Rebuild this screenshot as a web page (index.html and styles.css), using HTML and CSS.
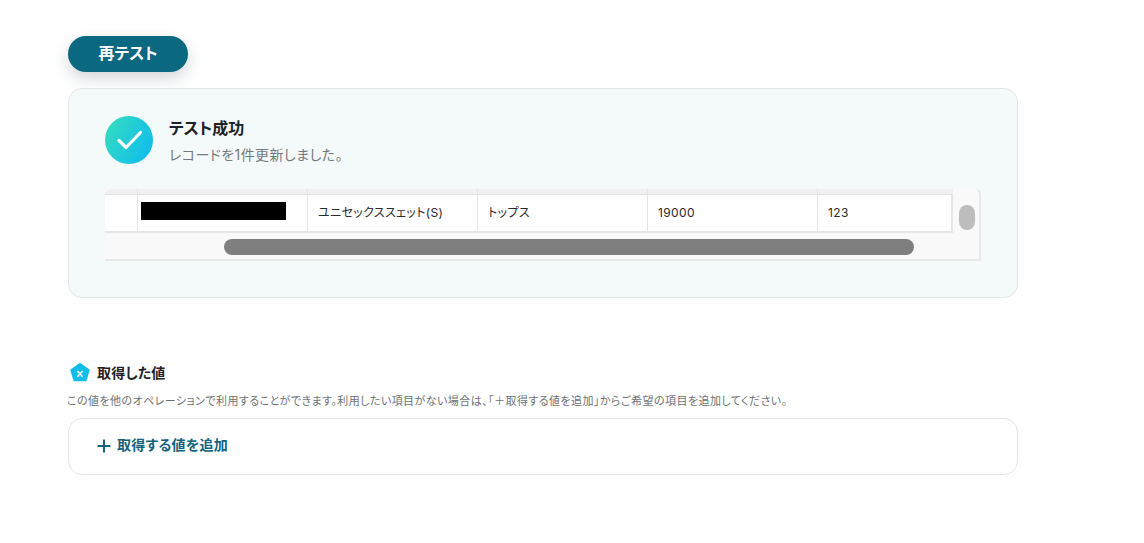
FILE: index.html
```html
<!DOCTYPE html>
<html lang="ja">
<head>
<meta charset="utf-8">
<title>テスト成功</title>
<link rel="stylesheet" href="styles.css">
</head>
<body>
<main class="page">
  <button class="retest">再テスト</button>
  <section class="result">
    <div class="status">
      <svg class="check" viewBox="0 0 48 48" width="48" height="48">
        <defs><linearGradient id="cg" x1="0" y1="0.2" x2="1" y2="0.7"><stop offset="0" stop-color="#34dcc0"/><stop offset="1" stop-color="#10bdec"/></linearGradient></defs>
        <circle cx="24" cy="24" r="24" fill="url(#cg)"/>
        <path d="M14 24.500l7 7L35.500 16.500" fill="none" stroke="#fff" stroke-width="3.200" stroke-linecap="round" stroke-linejoin="round"/>
      </svg>
      <div class="status-text">
        <h2 class="status-title">テスト成功</h2>
        <p class="status-sub">レコードを1件更新しました。</p>
      </div>
    </div>
    <div class="sheet">
      <div class="sheet-main">
        <div class="sheet-head">
          <div class="hc c0"></div><div class="hc c1"></div><div class="hc c1"></div><div class="hc c1"></div><div class="hc c1"></div><div class="hc c5"></div>
        </div>
        <div class="sheet-row">
          <div class="cell c0"></div>
          <div class="cell c1"><span class="redact"></span></div>
          <div class="cell c1">ユニセックススェット(S)</div>
          <div class="cell c1">トップス</div>
          <div class="cell c1">19000</div>
          <div class="cell c5">123</div>
        </div>
        <div class="hbar"><span class="hthumb"></span></div>
      </div>
      <div class="vbar"><span class="vthumb"></span></div>
    </div>
  </section>
  <section class="values">
    <h3 class="values-title">
      <svg class="penta" viewBox="0 0 22 22" width="22" height="22">
        <path d="M11 2.500L20 9 16.800 19.500H5.200L2 9Z" fill="#12bdea" stroke="#12bdea" stroke-width="1.500" stroke-linejoin="round"/>
        <path d="M8.800 10.500l4.400 4.800M13.200 10.500l-4.400 4.800" stroke="#fff" stroke-width="1.500" stroke-linecap="round"/>
      </svg>
      取得した値
    </h3>
    <p class="values-note">この値を他のオペレーションで利用することができます。利用したい項目がない場合は、「＋取得する値を追加」からご希望の項目を追加してください。</p>
    <div class="add-box">
      <svg class="plus" viewBox="0 0 14 14" width="14" height="14"><path d="M7 .5v13M.5 7h13" stroke="#12647c" stroke-width="2"/></svg>
      <span class="add-label">取得する値を追加</span>
    </div>
  </section>
</main>
</body>
</html>
```
FILE: styles.css
```css
* { box-sizing: border-box; }
html, body { margin: 0; padding: 0; background: #fff; }
body { font-family: Inter, "Noto Sans CJK JP", "Noto Sans", sans-serif; font-feature-settings: "palt"; color: #1f2225; height: 543px; overflow: hidden; }
.page { width: 950px; margin-left: 68px; padding-top: 36px; }
.retest {
  display: block; width: 120px; height: 36px; padding: 0 0 5px; border: 0; border-radius: 18px;
  background: #0a6880; color: #fff; font: 700 16px Inter, "Noto Sans CJK JP", sans-serif; font-feature-settings: "palt";
  box-shadow: 0 6px 16px rgba(30, 50, 70, .2);
}
.result {
  margin-top: 16px; height: 210px; background: #f4f9fa; border: 1px solid #e2e6e8; border-radius: 14px;
  padding: 27px 36px 0;
}
.status { display: flex; gap: 16px; align-items: flex-start; }
.check { flex: none; }
.status-text { padding-top: 1px; }
.status-title { margin: 0; font-size: 16px; line-height: 22px; font-weight: 700; color: #1f2225; }
.status-sub { margin: 6px 0 0; font-size: 14px; line-height: 20px; letter-spacing: .03em; color: #75797c; }
.sheet { display: flex; width: 876px; height: 72px; margin-top: 24px; background: #f9f9f9; border-right: 2px solid #e8e8e8; border-bottom: 2px solid #e8e8e8; border-radius: 0 6px 0 0; }
.sheet-main { width: 848px; flex: none; }
.sheet-head { display: flex; height: 6px; background: #f0f0f0; border-bottom: 1px solid #e4e4e4; border-radius: 6px 0 0 0; }
.hc { height: 5px; border-right: 1px solid #e4e4e4; }
.sheet-row { display: flex; height: 38px; background: #fff; border-bottom: 2px solid #e6e6e6; border-right: 2px solid #e6e6e6; }
.cell { border-right: 1px solid #e4e4e4; padding-left: 10px; font-size: 12px; line-height: 35px; letter-spacing: .03em; color: #2a2a2a; white-space: nowrap; }
.c0 { width: 33px; flex: none; }
.c1 { width: 170px; flex: none; }
.c5 { flex: 1; border-right: 0; }
.hc.c5 { border-right: 0; }
.redact { display: block; width: 145px; height: 18px; margin: 7px 0 0 -7px; background: #000; }
.hbar { padding: 6px 0 0 119px; }
.hthumb { display: block; width: 690px; height: 16px; border-radius: 8px; background: #7f7f7f; }
.vbar { flex: 1; padding: 16px 0 0 6px; }
.vthumb { display: block; width: 16px; height: 25px; border-radius: 8px; background: #bdbdbd; }
.values { margin-top: 62px; }
.values-title { display: flex; align-items: center; gap: 6px; margin: 0 0 0 1px; height: 24px; font-size: 14px; letter-spacing: .01em; font-weight: 700; color: #1f2225; }
.values-note { margin: 9px 0 0 -1px; font-size: 11px; line-height: 16px; letter-spacing: .04em; color: #6e7275; white-space: nowrap; }
.add-box { display: flex; align-items: center; gap: 6px; height: 57px; margin-top: 9px; padding: 0 0 1px 28px; background: #fff; border: 1px solid #e2e6e8; border-radius: 14px; }
.add-label { padding-bottom: 5px; font-size: 14px; letter-spacing: .02em; font-weight: 700; color: #12647c; }
```
